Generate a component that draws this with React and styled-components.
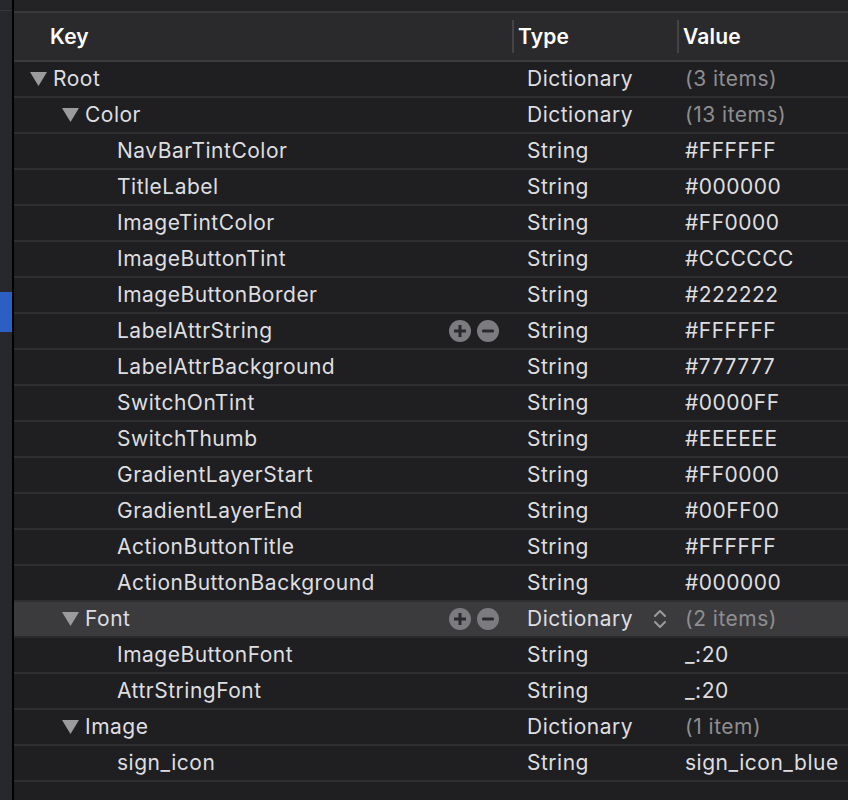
import React from 'react'
import styled, { createGlobalStyle } from 'styled-components'

const GlobalStyle = createGlobalStyle`
  html, body {
    margin: 0;
    padding: 0;
    background: #1f1f21;
  }
  body {
    font-family: Inter, "Noto Sans", "Liberation Sans", sans-serif;
    -webkit-font-smoothing: antialiased;
  }
`

const rows = [
  { key: 'Root', level: 0, open: true, type: 'Dictionary', value: '(3 items)', muted: true },
  { key: 'Color', level: 1, open: true, type: 'Dictionary', value: '(13 items)', muted: true },
  { key: 'NavBarTintColor', level: 2, type: 'String', value: '#FFFFFF' },
  { key: 'TitleLabel', level: 2, type: 'String', value: '#000000' },
  { key: 'ImageTintColor', level: 2, type: 'String', value: '#FF0000' },
  { key: 'ImageButtonTint', level: 2, type: 'String', value: '#CCCCCC' },
  { key: 'ImageButtonBorder', level: 2, type: 'String', value: '#222222' },
  { key: 'LabelAttrString', level: 2, type: 'String', value: '#FFFFFF', buttons: true },
  { key: 'LabelAttrBackground', level: 2, type: 'String', value: '#777777' },
  { key: 'SwitchOnTint', level: 2, type: 'String', value: '#0000FF' },
  { key: 'SwitchThumb', level: 2, type: 'String', value: '#EEEEEE' },
  { key: 'GradientLayerStart', level: 2, type: 'String', value: '#FF0000' },
  { key: 'GradientLayerEnd', level: 2, type: 'String', value: '#00FF00' },
  { key: 'ActionButtonTitle', level: 2, type: 'String', value: '#FFFFFF' },
  { key: 'ActionButtonBackground', level: 2, type: 'String', value: '#000000' },
  { key: 'Font', level: 1, open: true, type: 'Dictionary', value: '(2 items)', muted: true, buttons: true, selected: true, stepper: true },
  { key: 'ImageButtonFont', level: 2, type: 'String', value: '_:20' },
  { key: 'AttrStringFont', level: 2, type: 'String', value: '_:20' },
  { key: 'Image', level: 1, open: true, type: 'Dictionary', value: '(1 item)', muted: true },
  { key: 'sign_icon', level: 2, type: 'String', value: 'sign_icon_blue' },
]

const Frame = styled.div`
  display: flex;
  height: 800px;
  width: 848px;
  overflow: hidden;
`

const Sidebar = styled.div`
  width: 12px;
  flex-shrink: 0;
  background: #27282b;
  display: flex;
  flex-direction: column;
`

const SidebarTop = styled.div`
  height: 10px;
  border-bottom: 1px solid #36373a;
  margin-bottom: 281px;
`

const SidebarSelection = styled.div`
  height: 40px;
  background: #2c5fc4;
`

const Divider = styled.div`
  width: 2px;
  flex-shrink: 0;
  background: #000;
`

const Main = styled.div`
  flex: 1;
  display: flex;
  flex-direction: column;
  background: #1f1f21;
`

const TopBand = styled.div`
  height: 11px;
  background: #232325;
  border-bottom: 2px solid #38383a;
`

const Grid = styled.div`
  display: grid;
  grid-template-columns: 498px 165px 1fr;
`

const Header = styled(Grid)`
  height: 47px;
  background: #2a2a2c;
  border-bottom: 2px solid #3b3b3d;
  align-items: center;
`

const HeadCell = styled.div`
  color: #ffffff;
  font-size: 21px;
  font-weight: 600;
  letter-spacing: 0.2px;
  height: 33px;
  display: flex;
  align-items: center;
  padding-left: ${p => p.$pad}px;
  border-left: ${p => (p.$sep ? '2px solid #444446' : 'none')};
`

const Row = styled(Grid)`
  height: 34px;
  border-bottom: 2px solid ${p => (p.$selected ? '#2a2a2c' : '#2f2f31')};
  background: ${p => (p.$selected ? '#3b3b3d' : 'transparent')};
  align-items: center;
  font-size: 21px;
  letter-spacing: 0.5px;
  color: #dedee0;
  padding-bottom: 1px;
  box-sizing: border-box;
  height: 36px;
`

const KeyCell = styled.div`
  display: flex;
  align-items: center;
  padding-left: ${p => p.$indent}px;
  white-space: nowrap;
  position: relative;
`

const Disclosure = styled.svg`
  width: 17px;
  height: 14px;
  margin-right: 6px;
  flex-shrink: 0;
`

const RowButtons = styled.div`
  position: absolute;
  left: 435px;
  top: 50%;
  transform: translateY(-50%);
  display: flex;
  gap: 6px;
`

const TypeCell = styled.div`
  padding-left: 15px;
  display: flex;
  align-items: center;
  white-space: nowrap;
  position: relative;
`

const Stepper = styled.svg`
  position: absolute;
  left: 140px;
  top: 50%;
  transform: translateY(-50%);
  width: 16px;
  height: 24px;
`

const ValueCell = styled.div`
  padding-left: 8px;
  white-space: nowrap;
  color: ${p => (p.$muted ? '#8e8e91' : '#dedee0')};
`

const Rest = styled.div`
  flex: 1;
`

const CircleButton = ({ minus }) => (
  <svg width="22" height="22" viewBox="0 0 22 22">
    <circle cx="11" cy="11" r="11" fill="#7c7c80" />
    {minus ? (
      <rect x="5" y="9.5" width="12" height="3" rx="1" fill="#2a2a2c" />
    ) : (
      <path d="M9.5 5h3v4.5H17v3h-4.5V17h-3v-4.5H5v-3h4.5z" fill="#2a2a2c" />
    )}
  </svg>
)

const indents = [16, 48, 103]

export default function App() {
  return (
    <>
      <GlobalStyle />
      <Frame>
        <Sidebar>
          <SidebarTop />
          <SidebarSelection />
        </Sidebar>
        <Divider />
        <Main>
          <TopBand />
          <Header>
            <HeadCell $pad={36}>Key</HeadCell>
            <HeadCell $pad={4} $sep>Type</HeadCell>
            <HeadCell $pad={4} $sep>Value</HeadCell>
          </Header>
          {rows.map(r => (
            <Row key={r.key} $selected={r.selected}>
              <KeyCell $indent={indents[r.level]}>
                {r.open && (
                  <Disclosure viewBox="0 0 17 14">
                    <polygon points="0,0 17,0 8.5,14" fill="#9b9b9e" />
                  </Disclosure>
                )}
                {r.key}
                {r.buttons && (
                  <RowButtons>
                    <CircleButton />
                    <CircleButton minus />
                  </RowButtons>
                )}
              </KeyCell>
              <TypeCell>
                {r.type}
                {r.stepper && (
                  <Stepper viewBox="0 0 16 24">
                    <path d="M3 9l5-5 5 5M3 15l5 5 5-5" fill="none" stroke="#9b9b9e" strokeWidth="2" strokeLinecap="round" strokeLinejoin="round" />
                  </Stepper>
                )}
              </TypeCell>
              <ValueCell $muted={r.muted}>{r.value}</ValueCell>
            </Row>
          ))}
          <Rest />
        </Main>
      </Frame>
    </>
  )
}
